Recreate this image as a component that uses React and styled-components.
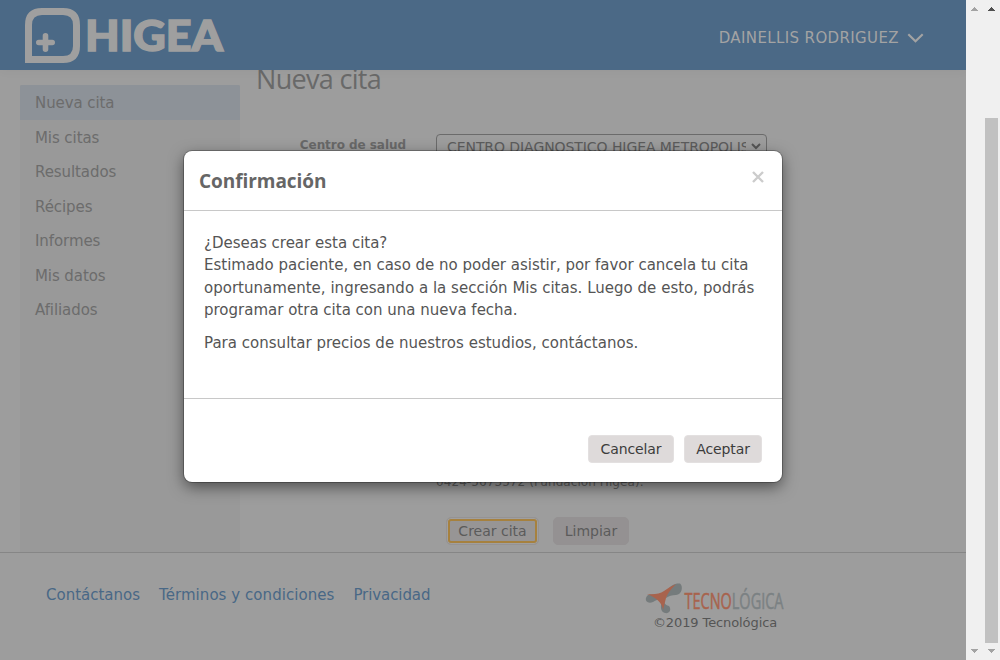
import React from 'react';
import styled, { createGlobalStyle } from 'styled-components';

const Global = createGlobalStyle`
  * { box-sizing: border-box; }
  body { margin: 0; overflow: hidden; }
`;
const sans = "Verdana, 'DejaVu Sans', sans-serif";

const Screen = styled.div`
  position: relative;
  display: flex;
  width: 1000px;
  height: 660px;
  background: #9d9d9d;
  font-family: ${sans};
  font-size: 15px;
`;
const Page = styled.div`
  display: flex;
  flex-direction: column;
  width: 966px;
  height: 660px;
  overflow: hidden;
`;
const Header = styled.header`
  position: relative;
  z-index: 1;
  flex: none;
  display: flex;
  align-items: flex-start;
  justify-content: space-between;
  height: 70px;
  padding: 8px 42px 0 25px;
  background: #4b6986;
  box-shadow: 0 1px 10px rgba(0, 0, 0, 0.04);
`;
const User = styled.div`
  display: flex;
  align-items: center;
  gap: 8px;
  height: 60px;
  color: #a3a3a3;
  svg { display: block; }
`;
const Text = styled.span`
  letter-spacing: ${(p) => p.$ls || 0}px;
  white-space: nowrap;
`;
const Main = styled.main`
  flex: none;
  display: flex;
  height: 482px;
  padding-left: 20px;
`;
const Sidebar = styled.nav`
  width: 220px;
  margin-top: 15px;
  background: #999999;
`;
const NavItem = styled.a`
  display: flex;
  align-items: center;
  height: ${(p) => (p.$active ? 35 : 34.5)}px;
  padding: ${(p) => (p.$active ? 0 : 1)}px 0 0 15px;
  border-radius: 2px 2px 0 0;
  background: ${(p) => (p.$active ? '#8d9298' : 'transparent')};
  color: #6c6c6c;
`;
const Content = styled.section`
  display: flex;
  flex-direction: column;
  width: 560px;
  padding-left: 16px;
`;
const Title = styled.h1`
  height: 34px;
  margin: -8px 0 38px;
  color: #696969;
  font: 400 27px/34px 'Open Sans', sans-serif;
  letter-spacing: -0.68px;
`;
const Field = styled.div`
  display: flex;
  height: 357px;
`;
const Label = styled.label`
  width: 180px;
  padding: 0 30px 0 0;
  color: #696969;
  font-size: 12px;
  font-weight: 700;
  line-height: 22px;
  letter-spacing: -0.05px;
  text-align: right;
`;
const FieldBody = styled.div`
  display: flex;
  flex-direction: column;
  justify-content: space-between;
  width: 331px;
`;
const Select = styled.div`
  display: flex;
  align-items: center;
  height: 27px;
  padding: 0 4px 1px 10px;
  border: 1px solid #6b6b6b;
  border-radius: 4px;
  color: #5c5c5c;
  font-size: 14px;
  letter-spacing: -0.07px;
  > span { width: 299px; overflow: hidden; white-space: nowrap; }
  svg { margin: -1px 0 0 5px; flex: none; }
`;
const Note = styled.div`
  color: #606060;
  font-size: 12px;
  line-height: 18px;
  letter-spacing: ${(p) => p.$ls}px;
`;
const FormActions = styled.div`
  display: flex;
  gap: 14px;
  padding: 26px 0 0 190px;
`;
const FormButton = styled.button`
  width: ${(p) => p.$w}px;
  height: 28px;
  margin: 0;
  padding: 0;
  border: 1px solid ${(p) => (p.$focus ? '#959394' : '#949192')};
  border-radius: 5px;
  outline: none;
  background: ${(p) => (p.$focus ? '#979595' : '#949192')};
  box-shadow: ${(p) => (p.$focus ? 'inset 0 0 0 1px #a09f9f, inset 0 0 0 3px #a6813f' : 'none')};
  color: #5b5b5b;
  font: 14px ${sans};
`;
const Footer = styled.footer`
  flex: 1;
  display: flex;
  justify-content: space-between;
  padding: 30px 181px 0 46px;
  border-top: 1px solid #868686;
`;
const Links = styled.div`
  display: flex;
  gap: 19px;
  height: 24px;
  align-items: center;
  color: #496886;
`;
const Brand = styled.div`
  display: flex;
  flex-direction: column;
  align-items: center;
  gap: 1px;
  width: 140px;
  color: #555;
  font-size: 13px;
  svg { display: block; height: 31px; overflow: visible; }
`;
const Bars = styled.aside`
  display: flex;
  width: 34px;
  height: 660px;
  background: #f0f0f0;
`;
const Bar = styled.div`
  display: flex;
  flex-direction: column;
  align-items: center;
  justify-content: space-between;
  width: 17px;
  padding: 7px 0 7px;
  svg { display: block; flex: none; }
`;
const Thumb = styled.div`
  width: 13px;
  height: 525px;
  margin: 100px 1px 0 0;
  background: #c1c1c1;
`;
const Modal = styled.div`
  position: absolute;
  z-index: 2;
  left: 184px;
  top: 151px;
  display: flex;
  flex-direction: column;
  width: 598px;
  height: 331px;
  border-radius: 8px;
  background: #fff;
  box-shadow: 0 0 0 1px rgba(0, 0, 0, 0.25), 0 5px 15px rgba(0, 0, 0, 0.5);
`;
const ModalHeader = styled.div`
  display: flex;
  justify-content: space-between;
  height: 60px;
  padding: 14px 18px 0 15px;
  border-bottom: 1px solid #c8c8c8;
  svg { margin-top: 6px; }
`;
const ModalTitle = styled.h2`
  margin: 0;
  color: #666;
  font: 700 19px/32px 'Open Sans', sans-serif;
  letter-spacing: -0.05px;
`;
const ModalBody = styled.div`
  height: 187px;
  padding: 20.5px 20px 0;
  color: #555;
  line-height: 22.5px;
`;
const Paragraph = styled.p`
  margin: 0 0 10px;
`;
const ModalFooter = styled.div`
  flex: 1;
  display: flex;
  justify-content: flex-end;
  gap: 10px;
  padding: 36px 20px 0;
  border-top: 1px solid #c8c8c8;
`;
const Button = styled.button`
  width: ${(p) => p.$w}px;
  height: 28px;
  padding: 0;
  border: 1px solid #e3e0e0;
  border-radius: 4px;
  background: #dedada;
  color: #3c3c3c;
  font: 14px ${sans};
  letter-spacing: -0.1px;
`;

const Logo = () => (
  <svg width="200" height="56" viewBox="0 0 200 56" aria-label="HIGEA">
    <path d="M3.5 51.5V17Q3.5 3.5 17 3.5H38Q51.5 3.5 51.5 17V38Q51.5 51.5 38 51.5Z" fill="none" stroke="#9f9f9f" strokeWidth="7" />
    <path d="M20.5 27.8v13.4M13.8 34.5h13.4" stroke="#9f9f9f" strokeWidth="5.6" strokeLinecap="round" />
    <text x="60" y="42.8" textLength="138" lengthAdjust="spacingAndGlyphs" fill="#9f9f9f" stroke="#9f9f9f" strokeWidth="1.5" fontFamily="Lato, sans-serif" fontWeight="900" fontSize="42">HIGEA</text>
  </svg>
);
const TecLogo = () => (
  <svg width="140" height="31" viewBox="0 0 140 31">
    <g fill="#757b7c">
      <path d="M22 8C26 2 30 0 35 .5C38.500 3 37 12 31 12Q25 12 21 15Z" />
      <path d="M1 15C2 10 9 11 14 14L18 16Q12 16 8 19C3 21 0 18 1 15Z" />
      <path d="M18 16Q19 22 24 23C27 27 24 31 20 30C15 29 15 22 18 16Z" />
    </g>
    <path d="M2 11Q13 12 19 8Q24 4 31 1Q23 9 21 15L18 27Q17 17 2 11Z" fill="#a8634d" />
    <text x="39.500" y="26" textLength="99" lengthAdjust="spacingAndGlyphs" strokeWidth=".5" fontFamily="Open Sans, sans-serif" fontSize="21"><tspan fill="#a8634d" stroke="#a8634d">TECNO</tspan><tspan fill="#7b8183" stroke="#7b8183">LÓGICA</tspan></text>
  </svg>
);
const Arrow = ({ down, color }) => (
  <svg width="7" height="4" viewBox="0 0 7 4" shapeRendering="crispEdges">
    <path d={down ? 'M0 0H7V1H6V2H5V3H4V4H3V3H2V2H1V1H0Z' : 'M0 4H7V3H6V2H5V1H4V0H3V1H2V2H1V3H0Z'} fill={color} />
  </svg>
);

const sections = ['Nueva cita', 'Mis citas', 'Resultados', 'Récipes', 'Informes', 'Mis datos', 'Afiliados'];

export default function App() {
  return (
    <Screen>
      <Global />
      <Page>
        <Header>
          <Logo />
          <User>
            <Text $ls={0.38}>DAINELLIS RODRIGUEZ</Text>
            <svg width="17" height="10" viewBox="0 0 17 10"><path d="M1.300 1.300L8.500 8.300L15.700 1.300" fill="none" stroke="#a3a3a3" strokeWidth="2.1" /></svg>
          </User>
        </Header>
        <Main>
          <Sidebar>
            {sections.map((s, i) => <NavItem key={s} $active={i === 0}><Text $ls={-0.08}>{s}</Text></NavItem>)}
          </Sidebar>
          <Content>
            <Title>Nueva cita</Title>
            <Field>
              <Label>Centro de salud</Label>
              <FieldBody>
                <Select>
                  <span>CENTRO DIAGNOSTICO HIGEA METROPOLIS</span>
                  <svg width="10" height="7" viewBox="0 0 10 7"><path d="M1 1L5 5L9 1" fill="none" stroke="#555" strokeWidth="2" /></svg>
                </Select>
                <Note $ls={0.08}>0424-5673572 (Fundación Higea).</Note>
              </FieldBody>
            </Field>
            <FormActions>
              <FormButton $w={93} $focus>Crear cita</FormButton>
              <FormButton $w={76}>Limpiar</FormButton>
            </FormActions>
          </Content>
        </Main>
        <Footer>
          <Links>
            <Text>Contáctanos</Text>
            <Text $ls={0.05}>Términos y condiciones</Text>
            <Text $ls={-0.08}>Privacidad</Text>
          </Links>
          <Brand>
            <TecLogo />
            <Text $ls={-0.1}>©2019 Tecnológica</Text>
          </Brand>
        </Footer>
      </Page>
      <Bars>
        <Bar><Arrow color="#a3a3a3" /><Arrow down color="#a3a3a3" /></Bar>
        <Bar><Arrow color="#505050" /><Thumb /><Arrow down color="#a3a3a3" /></Bar>
      </Bars>
      <Modal role="dialog">
        <ModalHeader>
          <ModalTitle>Confirmación</ModalTitle>
          <svg width="12" height="12" viewBox="0 0 12 12"><path d="M1 1L11 11M11 1L1 11" stroke="#ccc" strokeWidth="2.4" /></svg>
        </ModalHeader>
        <ModalBody>
          <Paragraph>
            <Text>¿Deseas crear esta cita?</Text><br />
            <Text $ls={-0.01}>Estimado paciente, en caso de no poder asistir, por favor cancela tu cita</Text><br />
            <Text $ls={0.02}>oportunamente, ingresando a la sección Mis citas. Luego de esto, podrás</Text><br />
            <Text>programar otra cita con una nueva fecha.</Text>
          </Paragraph>
          <Paragraph><Text $ls={0.02}>Para consultar precios de nuestros estudios, contáctanos.</Text></Paragraph>
        </ModalBody>
        <ModalFooter>
          <Button $w={86}>Cancelar</Button>
          <Button $w={78}>Aceptar</Button>
        </ModalFooter>
      </Modal>
    </Screen>
  );
}
